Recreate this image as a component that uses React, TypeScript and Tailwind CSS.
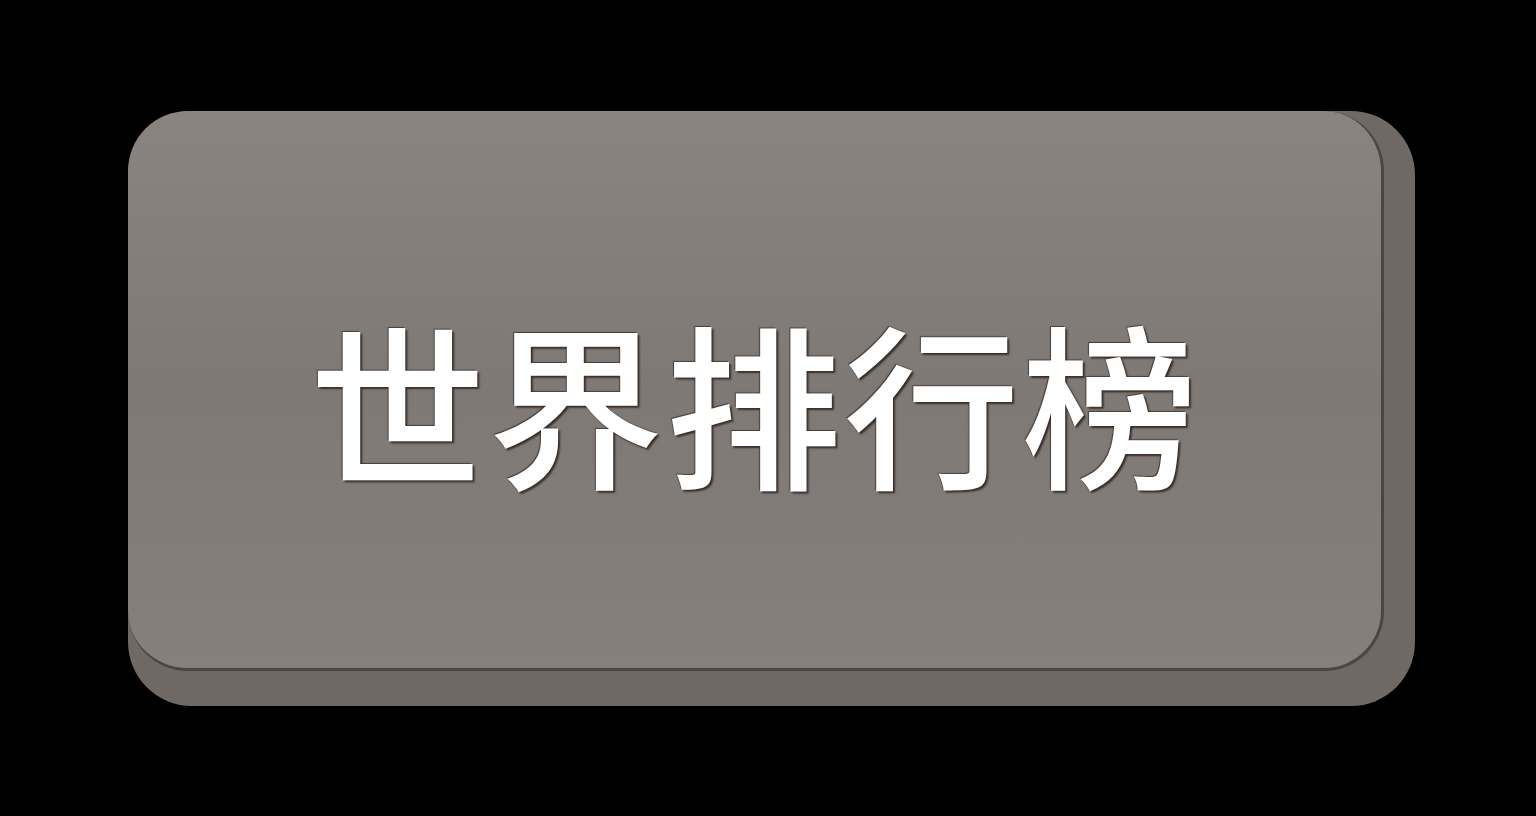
export default function App() {
  return (
    <div className="flex h-screen w-full items-center justify-center bg-black pl-[7px]">
      {/* raised button: darker base peeking out below and to the right */}
      <div className="relative h-[595px] w-[1287px] rounded-[64px] bg-[#6f6863]">
        <div className="flex h-[560px] w-[1256px] items-center justify-center rounded-[60px] border-b-[3px] border-r-[3px] border-[#4a4645] bg-gradient-to-b from-[#8a8480] via-[#7f7975] to-[#85807c] pt-[22px]">
          <span
            className="text-[176px] font-medium leading-none tracking-[2px] text-white [text-shadow:2px_2px_2px_#3a2e28,-1px_-1px_1px_#4a3e38]"
            style={{ fontFamily: '"Noto Sans CJK SC", "Noto Sans", sans-serif' }}
          >
            世界排行榜
          </span>
        </div>
      </div>
    </div>
  );
}
